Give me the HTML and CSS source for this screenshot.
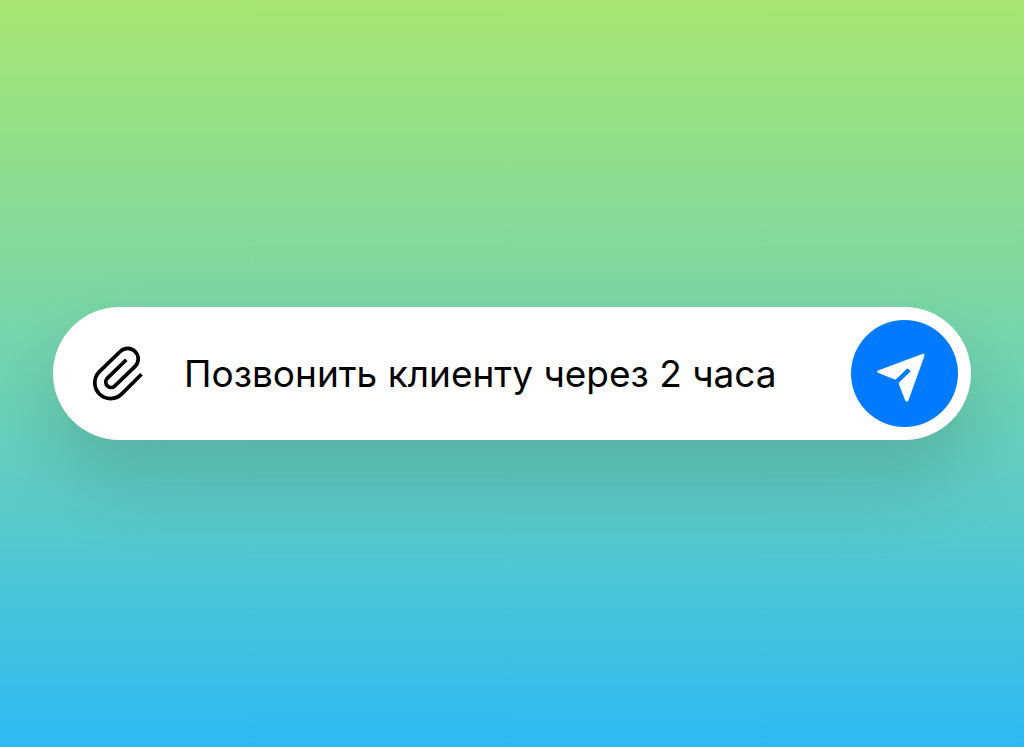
FILE: index.html
```html
<!DOCTYPE html>
<html lang="ru">
	<head>
		<meta charset="UTF-8" />
		<meta name="viewport" content="width=device-width, initial-scale=1.0" />
		<title>Новая задача</title>
		<link rel="stylesheet" href="styles.css">
	</head>
	<body>
		<form class="message-bar">
			<button class="attach" type="button" aria-label="Прикрепить файл">
				<svg class="attach-icon" viewBox="12 11 52 56" aria-hidden="true">
					<path d="M61.5 39.2 41.8 58.9A15.8 15.8 0 0 1 19.4 36.6L40.2 16.5A10.5 10.5 0 0 1 55.1 31.4L34.6 51.2A5.4 5.4 0 0 1 27 43.6L46.3 24.7" />
				</svg>
			</button>
			<input class="message" type="text" aria-label="Сообщение" value="Позвонить клиенту через 2 часа" />
			<button class="send" type="submit" aria-label="Отправить">
				<svg class="send-icon" viewBox="32 31 56 56" aria-hidden="true">
					<path d="M77.3 38.9 33 55.5Q31 56.6 33 57.7L49.2 64.3Q50.3 64.7 51.2 63.9L62.4 53.2 65.8 56.2 54.5 66.9Q53.4 68 54 69.4L60.3 85.7Q61.8 88 63.3 85.7L79.4 41Q79.8 38 77.3 38.9Z" />
				</svg>
			</button>
		</form>
	</body>
</html>
```

FILE: styles.css
```css
* {
	margin: 0;
	padding: 0;
	box-sizing: border-box;
}
body {
	min-height: 100vh;
	display: flex;
	align-items: center;
	padding: 0 53px;
	background: linear-gradient(#a7e671, #65cfbf 60%, #2cbaf3);
	font-family: Inter, "Liberation Sans", sans-serif;
}
.message-bar {
	flex: 1;
	min-width: 0;
	display: flex;
	align-items: center;
	padding: 13px 13px 13px 39px;
	border-radius: 67px;
	background-color: #fff;
	box-shadow: 0 40px 80px rgba(0, 0, 0, 0.15);
}
button {
	flex: none;
	border: none;
	background: none;
	cursor: pointer;
}
.attach-icon {
	display: block;
	width: 52px;
	height: 56px;
	fill: none;
	stroke: #000;
	stroke-width: 3.7;
}
.message {
	flex: 1;
	min-width: 0;
	margin: 0 40px;
	border: none;
	outline: none;
	background: none;
	color: #000;
	font-family: inherit;
	font-size: 37px;
}
.send {
	display: flex;
	align-items: center;
	justify-content: center;
	width: 107px;
	height: 107px;
	border-radius: 50%;
	background-color: #007aff;
}
.send-icon {
	width: 56px;
	height: 56px;
	fill: #fff;
}
```
